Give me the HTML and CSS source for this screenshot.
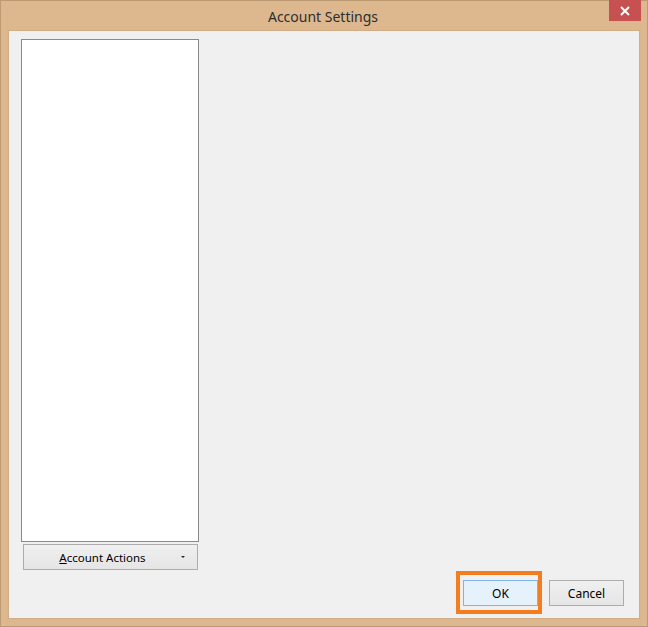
FILE: index.html
```html
<!DOCTYPE html>
<html>
<head>
    <title>Account Settings</title>
    <meta name="viewport" content="width=device-width, initial-scale=1.0">
    <link rel="stylesheet" href="styles.css">
</head>
<body>
    <div class="window">
        <div class="titlebar">
            <span class="title">Account Settings</span>
            <div class="close-btn">
                <svg width="10" height="10" viewBox="0 0 10 10">
                    <path d="M1 1 L9 9 M9 1 L1 9" stroke="#fff" stroke-width="2" fill="none"/>
                </svg>
            </div>
        </div>
        <div class="client">
            <div class="sidebar">
                <div class="account-list"></div>
                <button class="btn btn--actions">
                    <span><u>A</u>ccount Actions</span>
                    <span class="caret"></span>
                </button>
            </div>
            <div class="footer">
                <button class="btn btn--ok">OK</button>
                <button class="btn">Cancel</button>
            </div>
        </div>
        <!-- marca laranja em volta do OK -->
        <div class="highlight"></div>
    </div>
</body>
</html>
```

FILE: styles.css
```css
* {
    box-sizing: border-box;
}

body {
    margin: 0;
    font-family: "Noto Sans", "Open Sans", Arial, sans-serif;
    background-color: #deb88f;
}

.window {
    position: relative;
    width: 648px;
    height: 627px;
    background-color: #ddb88e;
    border: 1px solid #bc9a74;
    display: flex;
    flex-direction: column;
    padding: 0 7px 7px 7px;
}

.titlebar {
    height: 29px;
    display: flex;
    align-items: center;
    justify-content: center;
    flex-shrink: 0;
}

.title {
    font-size: 14px;
    color: #2e2e2e;
    margin-top: 2px;
    margin-left: -2px;
}

.close-btn {
    position: absolute;
    top: -1px;
    left: 608px;
    width: 32px;
    height: 21px;
    background-color: #c75050;
    display: flex;
    align-items: center;
    justify-content: center;
}

.client {
    flex: 1;
    background-color: #f0f0f0;
    border: 1px solid #d2ae86;
    display: flex;
    flex-direction: column;
    padding: 8px 15px 12px 12px;
}

.sidebar {
    width: 178px;
}

.account-list {
    height: 503px;
    background-color: #fff;
    border: 1px solid #8a8a8a;
}

.btn {
    font-family: "Noto Sans", "Open Sans", Arial, sans-serif;
    font-size: 12px;
    color: #000;
    height: 26px;
    width: 75px;
    padding: 0;
    border: 1px solid #acacac;
    background: linear-gradient(#f0f0f0, #e5e5e5);
}

.btn--actions {
    width: 175px;
    margin: 2px 0 0 2px;
    padding-right: 16px;
    font-size: 11.5px;
    display: flex;
    align-items: center;
    justify-content: center;
    position: relative;
}

.caret {
    position: absolute;
    right: 12px;
    top: 11px;
    width: 0;
    height: 0;
    border-left: 2px solid transparent;
    border-right: 2px solid transparent;
    border-top: 2px solid #222;
}

.footer {
    margin-top: auto;
    display: flex;
    justify-content: flex-end;
    gap: 11px;
}

.btn--ok {
    background: #e5f1fb;
    border-color: #7eb4ea;
}

.highlight {
    position: absolute;
    left: 455px;
    top: 570px;
    width: 86px;
    height: 43px;
    border: 4px solid #f47d20;
    pointer-events: none;
}
```
